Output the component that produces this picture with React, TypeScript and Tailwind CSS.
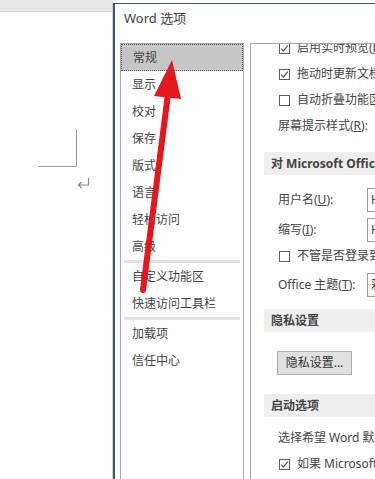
import type { ReactNode } from 'react';

const navGroups = [
  ['常规', '显示', '校对', '保存', '版式', '语言', '轻松访问', '高级'],
  ['自定义功能区', '快速访问工具栏'],
  ['加载项', '信任中心'],
];

const Check = ({ checked }: { checked?: boolean }) => (
  <span className="w-[11px] h-[11px] border border-[#5f5f5f] bg-white flex items-center justify-center shrink-0">
    {checked && (
      <svg width="9" height="9" viewBox="0 0 9 9">
        <path d="M1.2 4.6 L3.5 7 L7.9 1.6" fill="none" stroke="#5a5a5a" strokeWidth="1.2" />
      </svg>
    )}
  </span>
);

const Key = ({ children }: { children: ReactNode }) => <span className="underline">{children}</span>;

const Header = ({ children, className = '' }: { children: ReactNode; className?: string }) => (
  <div className={`h-[23px] bg-[#eeeeee] pl-[7px] flex items-center font-bold text-[#444] whitespace-nowrap ${className}`}>
    {children}
  </div>
);

const CheckRow = ({ checked, children, className = '' }: { checked?: boolean; children: ReactNode; className?: string }) => (
  <div className={`h-[26px] pl-[15px] flex items-center gap-[7px] whitespace-nowrap ${className}`}>
    <Check checked={checked} />
    <span>{children}</span>
  </div>
);

const FieldRow = ({ label, value, className = '' }: { label: ReactNode; value: string; className?: string }) => (
  <div className={`h-[26px] pl-[14px] flex items-center whitespace-nowrap ${className}`}>
    <span className="w-[89px] shrink-0">{label}</span>
    <span className="h-[24px] w-[120px] shrink-0 border border-[#9a9a9a] bg-white pl-[3px] flex items-center">{value}</span>
  </div>
);

export default function App() {
  return (
    <div className="relative w-[375px] h-[479px] overflow-hidden bg-white flex font-['Noto_Sans','Noto_Sans_CJK_SC',sans-serif] text-[12px] text-[#444]">
      {/* document behind the dialog */}
      <div className="w-[112px] shrink-0 flex flex-col">
        <div className="h-[12px] bg-[#e7e7e7] border-b border-[#d6d6d6]" />
        <div className="relative flex-1">
          <div className="absolute left-[38px] top-[117px] w-[39px] h-[38px] border-r border-b border-[#9a9a9a]" />
          <svg className="absolute left-[76px] top-[164px]" width="15" height="14" viewBox="0 0 15 14">
            <path d="M12.5 2 V9 H2.5 M5.5 6 L2.5 9 L5.5 12" fill="none" stroke="#8a8a8a" strokeWidth="1.2" />
          </svg>
        </div>
      </div>
      <div className="w-[1px] shrink-0 bg-[#c9ced6]" />

      {/* dialog */}
      <div className="flex-1 mt-[3px] border-l-2 border-t border-[#42566f] bg-white flex flex-col min-w-0">
        <div className="h-[39px] pl-[9px] pt-[5px] text-[13px] text-[#444]">Word 选项</div>
        <div className="flex flex-1 gap-[6px] pl-[5px] min-h-0">
          {/* nav */}
          <div className="w-[124px] shrink-0 border-l border-t border-r border-[#a9a9a9] flex flex-col">
            {navGroups.map((group, gi) => (
              <div key={gi} className="flex flex-col">
                {gi > 0 && <div className="h-[3px] mx-[3px] bg-[#e3e3e3]" />}
                {group.map((item, i) => (
                  <div
                    key={item}
                    className={`h-[27px] pl-[11px] flex items-center ${
                      gi === 0 && i === 0 ? 'bg-[#c6c6c6] border border-dotted border-[#555]' : ''
                    }`}
                  >
                    {item}
                  </div>
                ))}
              </div>
            ))}
          </div>

          {/* options */}
          <div className="flex-1 border-l border-t border-[#a9a9a9] overflow-hidden min-w-0">
            <div className="-mt-[9px] pl-[13px] flex flex-col">
              <CheckRow checked>启用实时预览(<Key>L</Key>)</CheckRow>
              <CheckRow checked>拖动时更新文档内容(<Key>D</Key>)</CheckRow>
              <CheckRow>自动折叠功能区(<Key>N</Key>)</CheckRow>
              <div className="h-[26px] pl-[14px] flex items-center whitespace-nowrap">
                屏幕提示样式(<Key>R</Key>):
              </div>
              <Header className="mt-[13px]">对 Microsoft Office 进行个性化设置</Header>
              <FieldRow className="mt-[12px]" label={<>用户名(<Key>U</Key>):</>} value="HP" />
              <FieldRow className="mt-[4px]" label={<>缩写(<Key>I</Key>):</>} value="HP" />
              <CheckRow>不管是否登录到 Office 都始终使用这些值(<Key>A</Key>)</CheckRow>
              <FieldRow className="mt-[3px]" label={<>Office 主题(<Key>T</Key>):</>} value="彩色" />
              <Header className="mt-[11px]">隐私设置</Header>
              <div className="mt-[19px] pl-[13px] flex">
                <button className="h-[24px] w-[75px] border border-[#adadad] bg-[#e1e1e1] text-[#333] flex items-center justify-center">
                  隐私设置...
                </button>
              </div>
              <Header className="mt-[19px]">启动选项</Header>
              <div className="mt-[8px] h-[26px] pl-[14px] flex items-center whitespace-nowrap">
                选择希望 Word 默认情况下打开和编辑的扩展名:
              </div>
              <CheckRow checked className="h-[24px]">如果 Microsoft Word 不是查看和编辑文档的默认程序则告诉我</CheckRow>
            </div>
          </div>
        </div>
      </div>

      {/* red annotation arrow */}
      <svg className="absolute left-0 top-0 pointer-events-none" width="375" height="479" viewBox="0 0 375 479">
        <line x1="168" y1="94" x2="143" y2="290" stroke="#e5161c" strokeWidth="6" strokeLinecap="round" />
        <polygon points="172,60 154,96 181,99" fill="#e5161c" />
      </svg>
    </div>
  );
}
